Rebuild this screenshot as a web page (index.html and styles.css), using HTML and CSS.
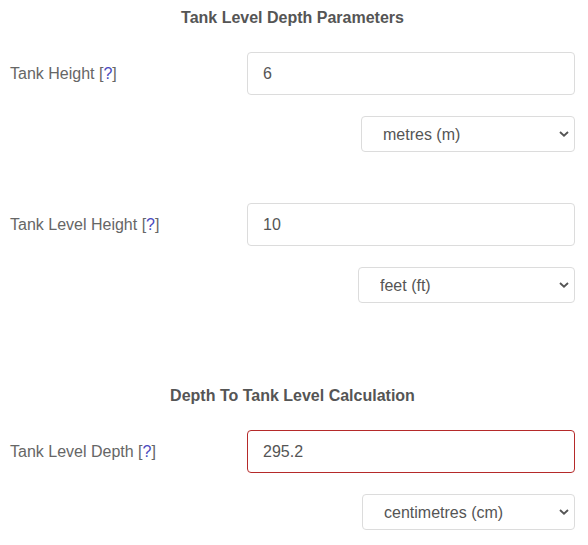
FILE: index.html
```html
<!DOCTYPE html>
<html lang="en">
<head>
<meta charset="utf-8">
<title>Tank Level Depth</title>
<link rel="stylesheet" href="styles.css">
</head>
<body>
<div class="calc">
  <section class="section">
    <h2 class="section-title">Tank Level Depth Parameters</h2>
    <div class="field">
      <label class="field-label">Tank Height <span class="help">[<a href="#">?</a>]</span></label>
      <input class="field-input" type="text" value="6">
    </div>
    <div class="unit-row">
      <select class="unit-select unit-select--m">
        <option>metres (m)</option>
      </select>
    </div>
    <div class="field field--spaced">
      <label class="field-label">Tank Level Height <span class="help">[<a href="#">?</a>]</span></label>
      <input class="field-input" type="text" value="10">
    </div>
    <div class="unit-row">
      <select class="unit-select unit-select--ft">
        <option>feet (ft)</option>
      </select>
    </div>
  </section>
  <section class="section section--result">
    <h2 class="section-title">Depth To Tank Level Calculation</h2>
    <div class="field">
      <label class="field-label">Tank Level Depth <span class="help">[<a href="#">?</a>]</span></label>
      <input class="field-input field-input--result" type="text" value="295.2">
    </div>
    <div class="unit-row">
      <select class="unit-select unit-select--cm">
        <option>centimetres (cm)</option>
      </select>
    </div>
  </section>
</div>
</body>
</html>
```
FILE: styles.css
```css
* { box-sizing: border-box; }
html, body { margin: 0; padding: 0; background: #fff; }
body {
  font-family: "Liberation Sans", Arial, sans-serif;
  color: #666;
}
.calc {
  padding: 8px 13px 0 10px;
  display: flex;
  flex-direction: column;
}
.section { display: flex; flex-direction: column; }
.section--result { margin-top: 83px; }
.section-title {
  margin: 0 0 24px 0;
  font-size: 16px;
  line-height: 20px;
  font-weight: bold;
  color: #555;
  text-align: center;
}
.field {
  display: grid;
  grid-template-columns: 237px 1fr;
  align-items: center;
}
.field--spaced { margin-top: 51px; }
.field-label {
  font-size: 16px;
  color: #666;
}
.help a { color: #4a4ac0; text-decoration: none; }
.field-input {
  height: 43px;
  width: 100%;
  border: 1px solid #dcdcdc;
  border-radius: 4px;
  padding: 0 15px;
  font-family: "Liberation Sans", Arial, sans-serif;
  font-size: 16px;
  color: #555;
  background: #fff;
  outline: none;
}
.field-input--result { border-color: #b52a2a; }
.unit-row {
  display: flex;
  justify-content: flex-end;
  margin-top: 21px;
}
.unit-select {
  -webkit-appearance: none;
  appearance: none;
  height: 36px;
  border: 1px solid #dcdcdc;
  border-radius: 4px;
  padding: 0 24px 0 21px;
  font-family: "Liberation Sans", Arial, sans-serif;
  font-size: 16px;
  color: #555;
  background-color: #fff;
  background-image: url("data:image/svg+xml;utf8,<svg xmlns='http://www.w3.org/2000/svg' width='10' height='6' viewBox='0 0 10 6'><path d='M1 1 L5 4.6 L9 1' fill='none' stroke='%23555' stroke-width='1.9'/></svg>");
  background-repeat: no-repeat;
  background-position: right 5px center;
  background-size: 10px 6px;
}
.unit-select--m { width: 214px; }
.unit-select--ft { width: 217px; }
.unit-select--cm { width: 213px; }
```
